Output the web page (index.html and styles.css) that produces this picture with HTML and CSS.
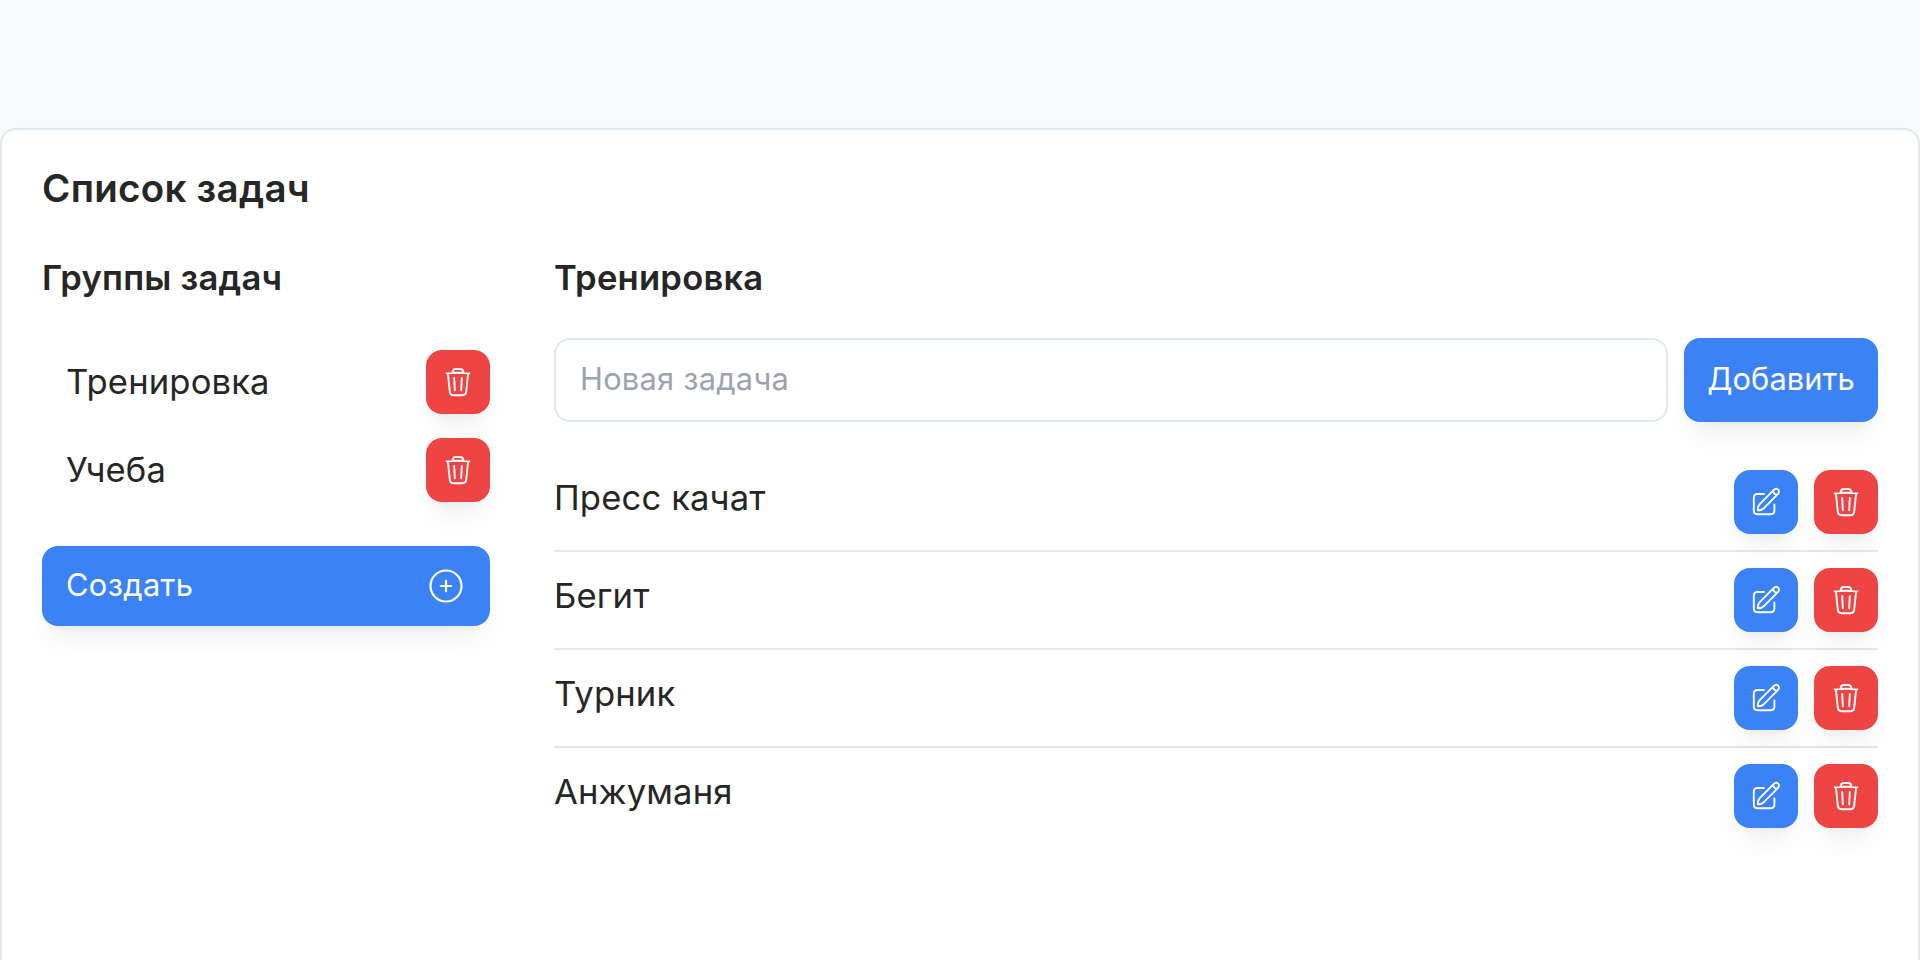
FILE: index.html
```html
<!DOCTYPE html>
<html lang="ru">
<head>
<meta charset="utf-8">
<title>Список задач</title>
<link rel="stylesheet" href="styles.css">
</head>
<body>
<svg class="sprite" aria-hidden="true">
  <symbol id="trash" viewBox="0 0 32 32">
    <path d="M4.7 7.4C12 6.6 20 6.6 27.3 7.4M10.7 6.7V5.8C10.9 4.1 12.2 3 13.9 3H18.1C19.8 3 21.1 4.1 21.3 5.8V6.7M5.9 7.5L7.8 25.7C8 28 9.2 29.2 11.4 29.2H20.6C22.8 29.2 24 28 24.2 25.7L26.1 7.5M12.2 12L12.8 24.2M19.8 12L19.2 24.2"/>
  </symbol>
  <symbol id="edit" viewBox="0 0 32 32">
    <path d="M14 8H7.6C5 8 3.8 9.3 3.8 11.6V24.6C3.8 27 5 28.2 7.4 28.2H20.8C23.2 28.2 24.4 27 24.4 24.6V18.5M7.9 24.2C7.5 21.6 8.6 19.4 10.2 17.7L23.6 4.2C25 2.7 26.8 2.4 28.1 3.6C29.4 4.8 29.1 6.8 27.8 8.2L14.4 21.7C12.6 23.4 10.4 24.5 7.9 24.2ZM23.2 4.8C23.2 7 24.9 8.8 27.2 8.8"/>
  </symbol>
  <symbol id="plus" viewBox="0 0 40 40">
    <circle cx="20" cy="20" r="15.5"/><path d="M20 14.8V25.2M14.8 20H25.2"/>
  </symbol>
</svg>
<main class="card">
  <h1 class="title">Список задач</h1>
  <div class="columns">
    <aside class="groups">
      <h2 class="heading">Группы задач</h2>
      <ul class="list">
        <li class="group"><span class="group-name">Тренировка</span><button class="icon-btn danger"><svg><use href="#trash"/></svg></button></li>
        <li class="group"><span class="group-name">Учеба</span><button class="icon-btn danger"><svg><use href="#trash"/></svg></button></li>
      </ul>
      <button class="btn create"><span>Создать</span><svg><use href="#plus"/></svg></button>
    </aside>
    <section class="tasks">
      <h2 class="heading">Тренировка</h2>
      <form class="new-task">
        <input class="input" type="text" placeholder="Новая задача">
        <button class="btn add" type="button">Добавить</button>
      </form>
      <ul class="list">
        <li class="task"><span class="task-name">Пресс качат</span><div class="actions"><button class="icon-btn primary"><svg><use href="#edit"/></svg></button><button class="icon-btn danger"><svg><use href="#trash"/></svg></button></div></li>
        <li class="task"><span class="task-name">Бегит</span><div class="actions"><button class="icon-btn primary"><svg><use href="#edit"/></svg></button><button class="icon-btn danger"><svg><use href="#trash"/></svg></button></div></li>
        <li class="task"><span class="task-name">Турник</span><div class="actions"><button class="icon-btn primary"><svg><use href="#edit"/></svg></button><button class="icon-btn danger"><svg><use href="#trash"/></svg></button></div></li>
        <li class="task"><span class="task-name">Анжуманя</span><div class="actions"><button class="icon-btn primary"><svg><use href="#edit"/></svg></button><button class="icon-btn danger"><svg><use href="#trash"/></svg></button></div></li>
      </ul>
    </section>
  </div>
</main>
</body>
</html>
```
FILE: styles.css
```css
* { box-sizing: border-box; margin: 0; padding: 0; }
body {
  height: 960px;
  padding-top: 128px;
  overflow: hidden;
  background: #f8fafc;
  color: #262626;
  font-family: Inter, "Open Sans", sans-serif;
}
button, input { font: inherit; border: 0; }
.sprite { display: none; }
.card {
  height: 832px;
  padding: 30px 40px 0;
  border: 2px solid #e2e8f0;
  border-bottom: 0;
  border-radius: 16px 16px 0 0;
  background: #fff;
  box-shadow: 0 0 40px rgba(15, 23, 42, .015);
}
.title { font-size: 38.5px; line-height: 56px; font-weight: 600; letter-spacing: .27px; }
.columns { display: grid; grid-template-columns: 448px 1fr; gap: 64px; margin-top: 32px; }
.heading { height: 90px; padding-top: 1px; font-size: 34.6px; line-height: 56px; font-weight: 600; letter-spacing: .22px; }
.list { list-style: none; font-size: 34.6px; line-height: 56px; font-weight: 400; letter-spacing: .15px; }
.group { display: flex; align-items: center; justify-content: space-between; height: 88px; padding-left: 24px; }
.group-name { padding-bottom: 2px; }
.task-name { margin-top: -1px; }
.icon-btn {
  display: grid; place-items: center;
  width: 64px; height: 64px;
  border-radius: 16px;
}
.icon-btn, .btn { box-shadow: 0 20px 30px -6px rgba(15, 23, 42, .06), 0 8px 12px -8px rgba(15, 23, 42, .06); }
.icon-btn svg { width: 32px; height: 32px; }
svg { fill: none; stroke: #fff; stroke-width: 1.9; stroke-linecap: round; stroke-linejoin: round; }
.danger { background: #ef4444; }
.primary, .btn { background: #3b82f6; }
.btn { border-radius: 16px; color: #fff; font-size: 30.8px; font-weight: 400; letter-spacing: .35px; }
.create { display: flex; align-items: center; justify-content: space-between; width: 448px; height: 80px; margin-top: 32px; padding: 0 24px; }
.create span { padding-bottom: 3px; }
.create svg { width: 40px; height: 40px; stroke-width: 2.2; }
.new-task { display: flex; gap: 16px; height: 84px; margin-bottom: 32px; }
.input {
  flex: 1; min-width: 0;
  padding: 0 24px 3px;
  border: 2px solid #e2e8f0;
  border-radius: 16px;
  background: #fff;
  font-size: 30.8px;
  letter-spacing: .25px;
}
.input::placeholder { color: #9ca3af; }
.add { width: 194px; padding-bottom: 3px; letter-spacing: .1px; }
.task { display: flex; align-items: flex-start; justify-content: space-between; height: 98px; padding-top: 16px; border-bottom: 2px solid #e5e7eb; }
.task:last-child { border-bottom: 0; }
.actions { display: flex; gap: 16px; }
```
